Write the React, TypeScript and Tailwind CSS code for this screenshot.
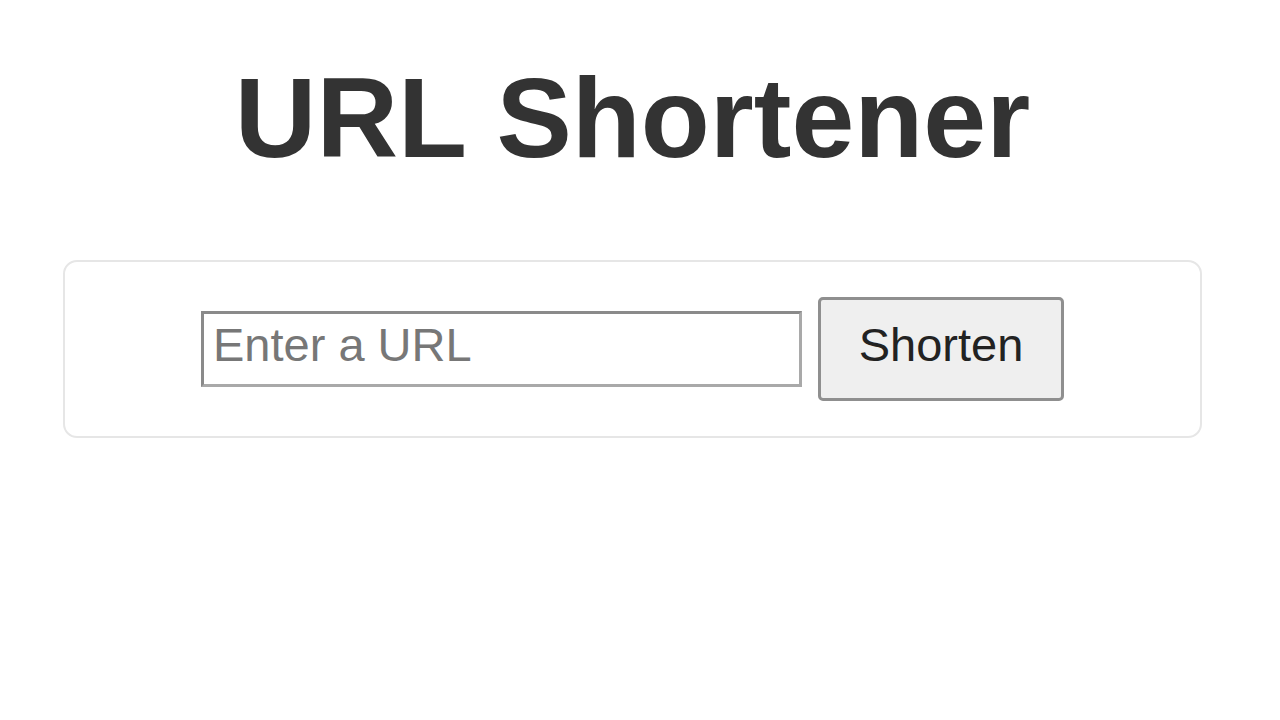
import React from "react";

export default function App() {
  return (
    <div className="min-h-[720px] w-[1280px] bg-white font-['Liberation_Sans',Arial,sans-serif]">
      <div className="w-[1265px] pt-[62px]">
        <h1 className="text-center text-[113px] font-bold leading-[112px] text-[#333333]">
          URL Shortener
        </h1>
        <div className="ml-[63px] mt-[86px] flex h-[178px] w-[1139px] items-center justify-center gap-[16px] rounded-[14px] border-2 border-[#e6e6e6]">
          <input
            type="text"
            placeholder="Enter a URL"
            className="h-[76px] w-[601px] border-[3px] border-t-[#8a8a8a] border-l-[#8a8a8a] border-r-[#a9a9a9] border-b-[#a9a9a9] bg-white pb-[9px] pl-[9px] text-[47px] text-[#333] placeholder:text-[#777777] outline-none"
          />
          <button className="h-[104px] w-[246px] rounded-[5px] border-[3px] border-[#8f8f8f] bg-[#efefef] pb-[8px] text-[47px] text-[#222]">
            Shorten
          </button>
        </div>
      </div>
    </div>
  );
}
